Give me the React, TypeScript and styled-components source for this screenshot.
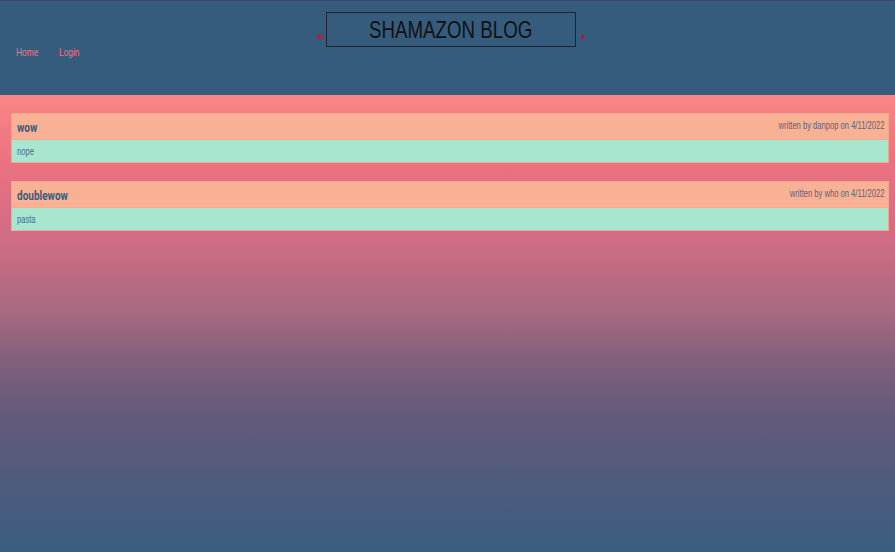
import React from "react";
import styled, { createGlobalStyle } from "styled-components";

const Global = createGlobalStyle`
  html, body { margin: 0; padding: 0; }
  body { font-family: "Liberation Sans", Arial, sans-serif; background: #355C7D; }
  * { box-sizing: border-box; }
`;

const Page = styled.div`
  width: 895px;
  min-height: 552px;
  display: flex;
  flex-direction: column;
`;

const Header = styled.header`
  height: 95px;
  background: #355c7d;
  border-top: 1px solid #3b4870;
  padding-top: 11px;
`;

const TitleRow = styled.div`
  display: flex;
  justify-content: center;
  align-items: flex-start;
  gap: 5px;
  padding-left: 7px;
`;

const Dot = styled.span`
  width: 3px;
  height: 4px;
  margin-top: 23px;
  background: #e8001a;
  border-radius: 1px;
`;

const TitleBox = styled.div`
  width: 250px;
  height: 35px;
  border: 1px solid #1e2430;
  display: flex;
  align-items: center;
  justify-content: center;
`;

const Squeeze = styled.span<{ $origin?: string; $scale?: number }>`
  display: inline-block;
  white-space: nowrap;
  transform: scaleX(${(p) => p.$scale ?? 0.76});
  transform-origin: ${(p) => p.$origin ?? "left"} center;
`;

const Title = styled(Squeeze)`
  font-size: 24px;
  color: #111;
  line-height: 28px;
  padding-top: 1px;
`;

const Nav = styled.nav`
  display: flex;
  gap: 14px;
  padding-left: 16px;
  margin-top: -1px;
`;

const NavLink = styled(Squeeze)`
  font-size: 11px;
  line-height: 13px;
  color: #f67280;
`;

const Main = styled.main`
  flex: 1;
  background: linear-gradient(
    to bottom,
    #fa8784 0%,
    #ec7281 14%,
    #d06c84 32%,
    #a86a80 47%,
    #7c5e7c 60%,
    #655a7b 70%,
    #4f5b7c 84%,
    #3a5d80 100%
  );
  padding: 18px 6px 18px 11px;
  display: flex;
  flex-direction: column;
  gap: 18px;
`;

const Card = styled.article`
  border: 1px solid #f4a88f;
  display: flex;
  flex-direction: column;
`;

const CardHead = styled.div`
  height: 26px;
  background: #f8b195;
  display: flex;
  align-items: center;
  justify-content: space-between;
  padding: 0 4px 0 5px;
  border-bottom: 1px solid #f3ad93;
`;

const CardTitle = styled(Squeeze)`
  font-family: Roboto, "Liberation Sans", sans-serif;
  font-weight: 700;
  font-size: 13px;
  color: #355c7d;
  padding-top: 2px;
`;

const Meta = styled(Squeeze)`
  font-size: 10px;
  color: #5d6479;
  margin-top: -3px;
`;

const CardBody = styled.div`
  height: 22px;
  background: #a8e6cf;
  display: flex;
  align-items: center;
  padding-left: 5px;
`;

const BodyText = styled(Squeeze)`
  font-size: 10px;
  color: #3f6f82;
`;

const posts = [
  { title: "wow", author: "danpop", date: "4/11/2022", body: "nope" },
  { title: "doublewow", author: "who", date: "4/11/2022", body: "pasta" },
];

export default function App() {
  return (
    <>
      <Global />
      <Page>
        <Header>
          <TitleRow>
            <Dot />
            <TitleBox>
              <Title $origin="center" $scale={0.78}>SHAMAZON BLOG</Title>
            </TitleBox>
            <Dot />
          </TitleRow>
          <Nav>
            <NavLink>Home</NavLink>
            <NavLink>Login</NavLink>
          </Nav>
        </Header>
        <Main>
          {posts.map((p) => (
            <Card key={p.title}>
              <CardHead>
                <CardTitle $scale={0.77}>{p.title}</CardTitle>
                <Meta $origin="right">
                  written by {p.author} on {p.date}
                </Meta>
              </CardHead>
              <CardBody>
                <BodyText>{p.body}</BodyText>
              </CardBody>
            </Card>
          ))}
        </Main>
      </Page>
    </>
  );
}
